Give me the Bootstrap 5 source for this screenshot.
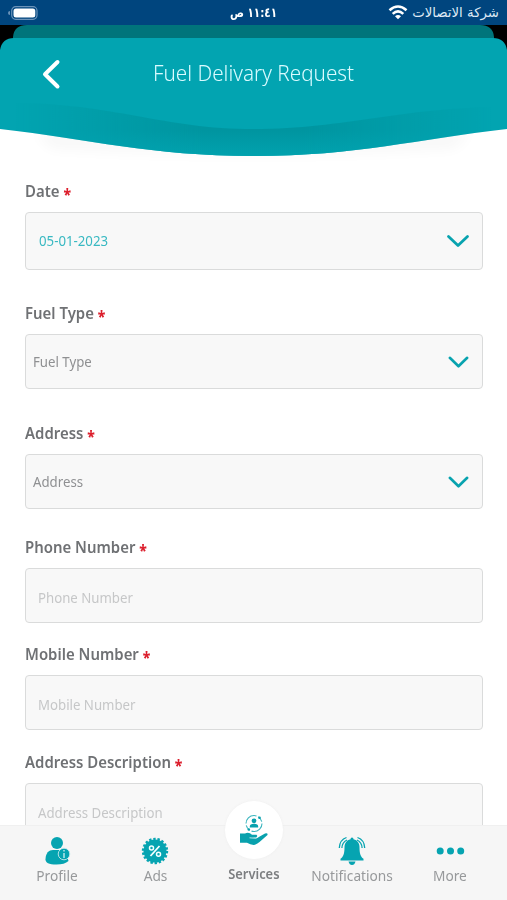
<!DOCTYPE html>
<html lang="en">
<head>
<meta charset="utf-8">
<meta name="viewport" content="width=device-width, initial-scale=1">
<title>Fuel Delivary Request</title>
<link rel="stylesheet" href="https://cdn.jsdelivr.net/npm/bootstrap@5.3.0/dist/css/bootstrap.min.css">
<style>
body{font-family:"Noto Sans","Open Sans",sans-serif;height:900px;background:#fff}
.phone{height:900px}
.status{height:25px;background:#00457e;color:#dfeaf5;font-family:"DejaVu Sans",sans-serif;padding:0 8px 0 7px}
.status .side{width:150px}
.clock{font-size:13px;font-weight:700;color:#fff;line-height:25px}
.clock .sq{transform:scaleX(.8);transform-origin:center}
.carrier{font-size:13.3px;white-space:nowrap}
.sq{display:inline-block;transform-origin:left center;white-space:nowrap;transform:scaleX(.945)}
.hero{height:135px}
.hero-bg{left:0;top:0}
.hero-row{height:72px;padding-top:26px}
.back{margin:0 92px 0 41px}
.title{font-size:21.5px;font-weight:300;color:#d9fbff;line-height:44px;transform:scaleX(.963);margin-top:-3px}
.form-area{padding:20px 24.5px 0 25px}
.f32{margin-bottom:32px}.f33{margin-bottom:33px}.f27{margin-bottom:27px}.f20{margin-bottom:20px}.f21{margin-bottom:21px}
.lbl{height:24px;line-height:23px;font-size:16px;font-weight:600;color:#6f7174;margin-bottom:8px}
.lbl .sq{transform:scaleX(.934)}
.lbl i{font-style:normal;color:#dc1f2d;display:inline-block;font-weight:800;font-size:15px;line-height:18px;vertical-align:-2.5px}
.box{height:55px;border:1.5px solid #dadbdb;border-radius:4px;background:#f8f8f8;color:#8f9092;font-size:14px;padding:0 11px 0 6.5px}
.box-date{height:58px;color:#39b9c2;padding-left:12.5px;padding-bottom:1px}
.box-text{color:#c6c7c8;padding:4px 11px 0 12px}
.tabs{height:75.5px;background:#f6f6f6;border-top:1px solid #f0f0f0;padding-left:8px}
.tab{color:#97999b;font-size:14.5px;width:98.3px;padding-top:10px}
.tab .sq{transform-origin:center;line-height:18px}
.tab-on{color:#7c7e80;font-weight:600;font-size:14px}
.tab-on .sq{margin-top:-1px;transform:scaleX(.92)}
.disc{width:58px;height:58px;left:50%;margin-left:-29px;top:-25px;background:#fff;border-radius:50%;box-shadow:0 0 3px #eee}
</style>
</head>
<body>
<div class="phone d-flex flex-column overflow-hidden">
  <div class="status d-flex align-items-center justify-content-between flex-shrink-0">
    <div class="side d-flex">
      <svg width="32" height="16" viewBox="0 0 32 16"><rect x="4.700" y="1.700" width="25.300" height="12.600" rx="4" fill="none" stroke="#6b93b9" stroke-width="1.200"/><rect x="6.500" y="3.500" width="21.800" height="9" rx="2.500" fill="#fff"/><path d="M3 6v4a2 2 0 0 1 0-4" fill="#6b93b9"/></svg>
    </div>
    <div class="clock" dir="rtl" lang="ar"><span class="sq">١١:٤١ ص</span></div>
    <div class="side d-flex justify-content-end align-items-center gap-1">
      <svg width="20" height="15" viewBox="0 0 20 15" fill="none" stroke="#fff" stroke-width="2.600"><path d="M1.500 5.300Q10-2.300 18.500 5.300M4.700 8.900Q10 4 15.300 8.900"/><path d="M7 11.200Q10 8.600 13 11.200L10 14.300Z" fill="#fff" stroke="none"/></svg>
      <span class="carrier" dir="rtl" lang="ar">شركة الاتصالات</span>
    </div>
  </div>

  <header class="hero position-relative flex-shrink-0">
    <svg class="hero-bg position-absolute" width="507" height="150" viewBox="0 25 507 150">
      <defs>
        <linearGradient id="sh" x1="0" y1="104" x2="0" y2="156" gradientUnits="userSpaceOnUse"><stop offset="0" stop-color="#00969f"/><stop offset=".5" stop-color="#0095a0"/><stop offset="1" stop-color="#01a2ae"/></linearGradient>
        <linearGradient id="fd" x1="0" x2="1" y1="0" y2="0"><stop offset=".03" stop-color="#fff" stop-opacity="0"/><stop offset=".4" stop-color="#fff"/><stop offset=".6" stop-color="#fff"/><stop offset=".97" stop-color="#fff" stop-opacity="0"/></linearGradient>
        <mask id="mk"><rect x="0" y="90" width="507" height="75" fill="url(#fd)"/></mask>
        <filter id="bl" x="-20%" y="-50%" width="140%" height="200%"><feGaussianBlur stdDeviation="7"/></filter>
      </defs>
      <path d="M0 25H507V60H0Z" fill="#000"/>
      <path d="M13 60V37Q14 25 27 25H480Q493 25 494 37V60Z" fill="#00747b"/>
      <path d="M35 130Q253 162 472 130L455 148Q253 160 50 148Z" fill="#000" opacity=".03" filter="url(#bl)"/>
      <path d="M0 50Q2 38 14 38H493Q505 38 507 50V129C417 139 357 156 253.500 156S90 139 0 129Z" fill="#02a4b1"/>
      <path d="M0 103C110 101 160 129 253.500 129S400 107 507 107V129C417 139 357 156 253.500 156S90 139 0 129Z" fill="url(#sh)" mask="url(#mk)"/>
    </svg>
    <div class="hero-row d-flex align-items-center position-relative">
      <svg class="back" width="20" height="32" viewBox="0 0 20 32" fill="none" stroke="#fff" stroke-width="4" stroke-linecap="round" stroke-linejoin="round"><path d="M16.500 4L4 16.300L16.500 28.500"/></svg>
      <h1 class="title mb-0 sq">Fuel Delivary Request</h1>
    </div>
  </header>

  <main class="form-area flex-grow-1 overflow-hidden">
    <div class="f32"><div class="lbl"><span class="sq">Date <i>*</i></span></div>
      <div class="box box-date d-flex align-items-center justify-content-between"><span class="sq">05-01-2023</span><svg width="26" height="14" viewBox="0 0 26 14" fill="none" stroke="#08a3af" stroke-width="2.800" stroke-linecap="round" stroke-linejoin="round"><path d="M3.500 2.500L13 11.500L22.500 2.500"/></svg></div></div>
    <div class="f33"><div class="lbl"><span class="sq">Fuel Type <i>*</i></span></div>
      <div class="box d-flex align-items-center justify-content-between"><span class="sq">Fuel Type</span><svg width="26" height="14" viewBox="0 0 26 14" fill="none" stroke="#08a3af" stroke-width="2.600" stroke-linecap="round" stroke-linejoin="round"><path d="M4.800 2.800L13.500 11.300L22.200 2.800"/></svg></div></div>
    <div class="f27"><div class="lbl"><span class="sq">Address <i>*</i></span></div>
      <div class="box d-flex align-items-center justify-content-between"><span class="sq">Address</span><svg width="26" height="14" viewBox="0 0 26 14" fill="none" stroke="#08a3af" stroke-width="2.600" stroke-linecap="round" stroke-linejoin="round"><path d="M4.800 2.800L13.500 11.300L22.200 2.800"/></svg></div></div>
    <div class="f20"><div class="lbl"><span class="sq">Phone Number <i>*</i></span></div>
      <div class="box box-text d-flex align-items-center"><span class="sq">Phone Number</span></div></div>
    <div class="f21"><div class="lbl"><span class="sq">Mobile Number <i>*</i></span></div>
      <div class="box box-text d-flex align-items-center"><span class="sq">Mobile Number</span></div></div>
    <div><div class="lbl"><span class="sq">Address Description <i>*</i></span></div>
      <div class="box box-text d-flex align-items-center"><span class="sq">Address Description</span></div></div>
  </main>

  <nav class="tabs d-flex flex-shrink-0 position-relative">
    <div class="tab d-flex flex-column align-items-center">
      <svg width="28" height="30" viewBox="0 0 28 30" fill="#06a4b1"><circle cx="14" cy="7" r="6"/><path d="M2.500 23.500C2.500 17 6 14 10 14h8c2.500 0 4.500 1.500 5.500 4l2 7q-4 3.500-12 3.500c-8 0-11-2-11-5Z"/><circle cx="21" cy="18" r="5.800" stroke="#c5e9ec" stroke-width=".9"/><path d="M21 14v1.500M21 17v5" stroke="#d5f0f2" stroke-width="1.300"/></svg>
      <span class="sq">Profile</span>
    </div>
    <div class="tab d-flex flex-column align-items-center">
      <svg width="28" height="30" viewBox="0 0 28 30"><circle cx="14" cy="15" r="11.500" fill="#06a4b1"/><circle cx="14" cy="15" r="12" fill="none" stroke="#06a4b1" stroke-width="2.400" stroke-dasharray="2.400 1.788"/><path d="M18.500 10L9.500 20" stroke="#f4ffff" stroke-width="1.800"/><circle cx="10.500" cy="12" r="2" fill="none" stroke="#f4ffff" stroke-width="1.500"/><circle cx="17.500" cy="18.300" r="2" fill="none" stroke="#f4ffff" stroke-width="1.500"/></svg>
      <span class="sq">Ads</span>
    </div>
    <div class="tab tab-on d-flex flex-column align-items-center position-relative">
      <div class="disc position-absolute d-flex align-items-center justify-content-center">
        <svg width="30" height="32" viewBox="0 0 30 32" fill="#08a1ad"><circle cx="15" cy="9.500" r="8" fill="none" stroke="#3bb5be" stroke-width="1.100" stroke-dasharray="15 2 6 2"/><circle cx="15" cy="6.800" r="2.400"/><path d="M10.800 13.500v-1q0-2.700 4.200-2.700t4.200 2.700v1Z"/><circle cx="9.800" cy="15.500" r="1.300"/><circle cx="20.500" cy="3.800" r="1.300"/><path d="M1 19.500h5c3-1.500 5-.500 7 1.200h4.500q1.700 1.500-.5 2.500l-4 .3 5.500.2 7.500-4.300q3-.8 2.500 1.500l-8 7.200q-2 1.800-4.500 2.700-4 .5-8-2H1Z"/><path d="M10.500 23.800l6.500.5 2.500-1.600" fill="none" stroke="#fff" stroke-width=".7"/></svg>
      </div>
      <svg width="28" height="30" viewBox="0 0 28 30"></svg>
      <span class="sq">Services</span>
    </div>
    <div class="tab d-flex flex-column align-items-center">
      <svg width="28" height="30" viewBox="0 0 28 30" fill="#06a4b1"><path d="M14 1.500q1.500 0 1.500 1.800c4 1 6 4 6 8 0 6 1 9.500 4 11.500v1.700H2.500v-1.700c3-2 4-5.500 4-11.500 0-4 2-7 6-8Q12.500 1.500 14 1.500Z"/><path d="M10.500 25.500h7q-1 3.500-3.500 3.500t-3.500-3.500Z"/><g fill="none" stroke="#06a4b1" stroke-width="1.300"><path d="M8.500 1.500C4 3 1.500 7 1.300 12M9 4C6 5.500 4 8 3.900 12M19.500 1.500C24 3 26.500 7 26.700 12M19 4C22 5.500 24 8 24.100 12"/></g></svg>
      <span class="sq">Notifications</span>
    </div>
    <div class="tab d-flex flex-column align-items-center">
      <svg width="30" height="30" viewBox="0 0 30 30" fill="#06a4b1"><circle cx="5.200" cy="15" r="3.500"/><circle cx="15.500" cy="15" r="3.500"/><circle cx="25.700" cy="15" r="3.500"/></svg>
      <span class="sq">More</span>
    </div>
  </nav>
</div>
</body>
</html>
